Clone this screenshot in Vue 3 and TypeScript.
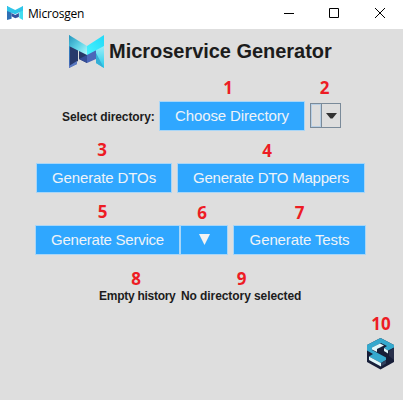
<script setup lang="ts">
import { ref } from 'vue'

const title = ref('Microsgen')
const heading = ref('Microservice Generator')
</script>

<template>
  <div class="window">
    <header class="titlebar">
      <svg class="app-icon" viewBox="0 0 35 34" preserveAspectRatio="none">
        <path d="M0 0L10 8V31L0 34Z" fill="#2f6fb4" />
        <path d="M35 0L27 13V29L35 34Z" fill="#42dcf0" />
        <path d="M10 17L18 22L26 17V27L18 30L10 25Z" fill="#32529f" />
        <path d="M0 0L18 10L35 0V11L18 20L0 12Z" fill="#2fc5e9" />
      </svg>
      <span class="title">{{ title }}</span>
      <div class="controls">
        <svg viewBox="0 0 46 28"><path d="M13 13.5H23" /></svg>
        <svg viewBox="0 0 46 28"><path d="M12.5 8.5H21.5V17.5H12.5Z" /></svg>
        <svg viewBox="0 0 46 28"><path d="M12 8L22 18M22 8L12 18" /></svg>
      </div>
    </header>

    <main class="content">
      <div class="brand">
        <svg class="logo" viewBox="0 0 35 33" width="35" height="33">
          <defs>
            <linearGradient id="wingL" x1="0" y1="0" x2="1" y2="1">
              <stop offset="0" stop-color="#2495bd" />
              <stop offset="0.55" stop-color="#62d5e7" />
              <stop offset="1" stop-color="#b8fbff" />
            </linearGradient>
            <linearGradient id="wingR" x1="1" y1="0" x2="0" y2="1">
              <stop offset="0" stop-color="#20d9f8" />
              <stop offset="1" stop-color="#48f3ff" />
            </linearGradient>
            <linearGradient id="legL" x1="0" y1="0" x2="0" y2="1">
              <stop offset="0" stop-color="#1d8fc4" />
              <stop offset="1" stop-color="#4a68b4" />
            </linearGradient>
            <linearGradient id="legR" x1="0" y1="0" x2="0" y2="1">
              <stop offset="0" stop-color="#dcffff" />
              <stop offset="1" stop-color="#22cbea" />
            </linearGradient>
          </defs>
          <path d="M0 0L8 11V29L0 33Z" fill="url(#legL)" />
          <path d="M1 11L9 15V26L1 31Z" fill="#28396b" />
          <path d="M0 33V31L8 26V29Z" fill="#5a78c0" />
          <path d="M35 0L27 11V28L35 33Z" fill="url(#legR)" />
          <path d="M27 18V28L35 33Z" fill="#35afd6" />
          <path d="M10 15L18 19V28L10 24Z" fill="#273768" />
          <path d="M10 24L18 20V28Z" fill="#354d96" />
          <path d="M18 19L27 15V24L18 28Z" fill="#4b67b9" />
          <path d="M0 0L18 11V20L0 11Z" fill="url(#wingL)" />
          <path d="M35 0L18 11V20L35 11Z" fill="url(#wingR)" />
        </svg>
        <h1>{{ heading }}</h1>
      </div>

      <div class="row row-dir">
        <span class="label select-label">Select directory:</span>
        <button class="btn choose"><i class="mark">1</i><span>Choose Directory</span></button>
        <div class="combo">
          <i class="mark">2</i>
          <span class="combo-value"></span>
          <span class="combo-arrow"><svg viewBox="0 0 11 6" width="11" height="6"><path d="M0 0H11L6.5 5.5H4.5Z" /></svg></span>
        </div>
      </div>

      <div class="row row-dto">
        <button class="btn dtos"><i class="mark">3</i><span>Generate DTOs</span></button>
        <button class="btn mappers"><i class="mark">4</i><span>Generate DTO Mappers</span></button>
      </div>

      <div class="row row-service">
        <div class="split">
          <button class="btn service"><i class="mark">5</i><span>Generate Service</span></button>
          <button class="btn more"><i class="mark">6</i><svg viewBox="0 0 11 11" width="11" height="11"><path d="M0 0H11L5.5 11Z" /></svg></button>
        </div>
        <button class="btn tests"><i class="mark">7</i><span>Generate Tests</span></button>
      </div>

      <div class="row row-status">
        <span class="label history"><i class="mark">8</i>Empty history</span>
        <span class="label selected"><i class="mark">9</i>No directory selected</span>
      </div>

      <div class="corner">
        <i class="mark">10</i>
        <svg viewBox="0 0 28 32" width="28" height="32">
          <path d="M13.5 0L27 7V24L13.5 31.5L0 24V7Z" fill="#171e38" />
          <path d="M13.5 0L27 7V9.500L21 12.500L17 10L20 8L14 5L5 9.500V12L19 19.500V22L14 25L2 18.500L6 16L0 12.500V7Z" fill="#35a9ce" />
          <path d="M5 9.500L13 5.500L17 7.500L10 11V14L5 11.500Z" fill="#e1f7fa" />
          <path d="M17 10L21 12.500V15.500L17 13Z" fill="#e1f7fa" />
          <path d="M2 18.500L14 25V28.500L2 22Z" fill="#e1f7fa" />
          <path d="M14 25L19 22V25.500L14 28.500Z" fill="#31415e" />
          <path d="M22 13L27 10V22L22 18Z" fill="#29304b" />
        </svg>
      </div>
    </main>
  </div>
</template>

<style>
body {
  margin: 0;
  background: #dedede;
}
</style>

<style scoped>
.window {
  width: 403px;
  height: 400px;
  display: flex;
  flex-direction: column;
  background: #dedede;
  font-family: "Liberation Sans", Arial, sans-serif;
  color: #1c1c1c;
  overflow: hidden;
}
.titlebar {
  height: 29px;
  flex: none;
  display: flex;
  align-items: flex-start;
  background: #fff;
}
.app-icon {
  width: 16px;
  height: 14px;
  margin: 6px 0 0 7px;
}
.title {
  margin: 5px 0 0 5px;
  font: 12px/17px "Open Sans", "Noto Sans", sans-serif;
  letter-spacing: -0.2px;
  color: #000;
}
.controls {
  display: flex;
  margin-left: auto;
  margin-right: -6px;
}
.controls svg {
  width: 46px;
  height: 28px;
  fill: none;
  stroke: #000;
  stroke-width: 1;
}
.content {
  position: relative;
  flex: 1;
}
.brand {
  display: flex;
  padding: 6px 0 0 69px;
  gap: 5px;
  height: 33px;
}
h1 {
  margin: 4px 0 0;
  font-size: 20px;
  line-height: 24px;
  letter-spacing: -0.03px;
  white-space: nowrap;
}
.row {
  display: flex;
}
.row-dir {
  margin: 33px 0 0 62px;
}
.row-dto {
  margin: 32px 0 0 36px;
  gap: 5px;
}
.row-service {
  margin: 32px 0 0 35px;
  gap: 5px;
}
.row-status {
  margin: 33px 0 0 99px;
}
.label {
  position: relative;
  font-size: 12px;
  font-weight: bold;
  line-height: 16px;
  letter-spacing: -0.08px;
  white-space: nowrap;
}
.select-label {
  width: 97px;
  padding-top: 8px;
}
.history {
  width: 82px;
  letter-spacing: -0.27px;
}
.selected {
  width: 121px;
}
.btn {
  position: relative;
  box-sizing: border-box;
  height: 30px;
  padding: 0 0 1px;
  display: flex;
  align-items: center;
  justify-content: center;
  border: 1px solid #a9d6f7;
  border-radius: 0;
  background: #2fa7ff;
  color: #eef3f8;
  font: 15px/17px "Liberation Sans", Arial, sans-serif;
  letter-spacing: -0.12px;
  white-space: nowrap;
}
.choose { width: 146px; }
.dtos { width: 136px; }
.mappers { width: 188px; letter-spacing: -0.24px; }
.split { display: flex; }
.service { width: 145px; letter-spacing: -0.24px; }
.more { width: 48px; }
.tests { width: 133px; }
.more svg { fill: #f2f2f2; }
.combo {
  position: relative;
  box-sizing: border-box;
  display: flex;
  width: 31px;
  height: 25px;
  margin: 2px 0 0 5px;
  border: 1px solid #7a8a99;
}
.combo-value {
  box-sizing: border-box;
  width: 10px;
  border: 1px solid #b8cfe5;
}
.combo-arrow {
  flex: 1;
  display: flex;
  align-items: center;
  justify-content: center;
  border-left: 1px solid #7a8a99;
}
.combo-arrow svg { fill: #333; }
.mark {
  position: absolute;
  left: 50%;
  top: -24px;
  transform: translateX(-50%);
  font: bold 17px/20px "Open Sans", "Noto Sans", sans-serif;
  letter-spacing: 0;
  color: #ed1c24;
}
.choose .mark,
.mappers .mark,
.history .mark { margin-left: -4px; }
.service .mark { margin-left: -5px; }
.dtos .mark,
.more .mark { margin-left: -2px; }
.combo .mark {
  top: -26px;
  margin-left: -1px;
}
.mappers .mark,
.more .mark,
.tests .mark { top: -23px; }
.label .mark { top: -19px; }
.corner {
  position: absolute;
  left: 367px;
  top: 309px;
  width: 28px;
  height: 32px;
}
</style>
